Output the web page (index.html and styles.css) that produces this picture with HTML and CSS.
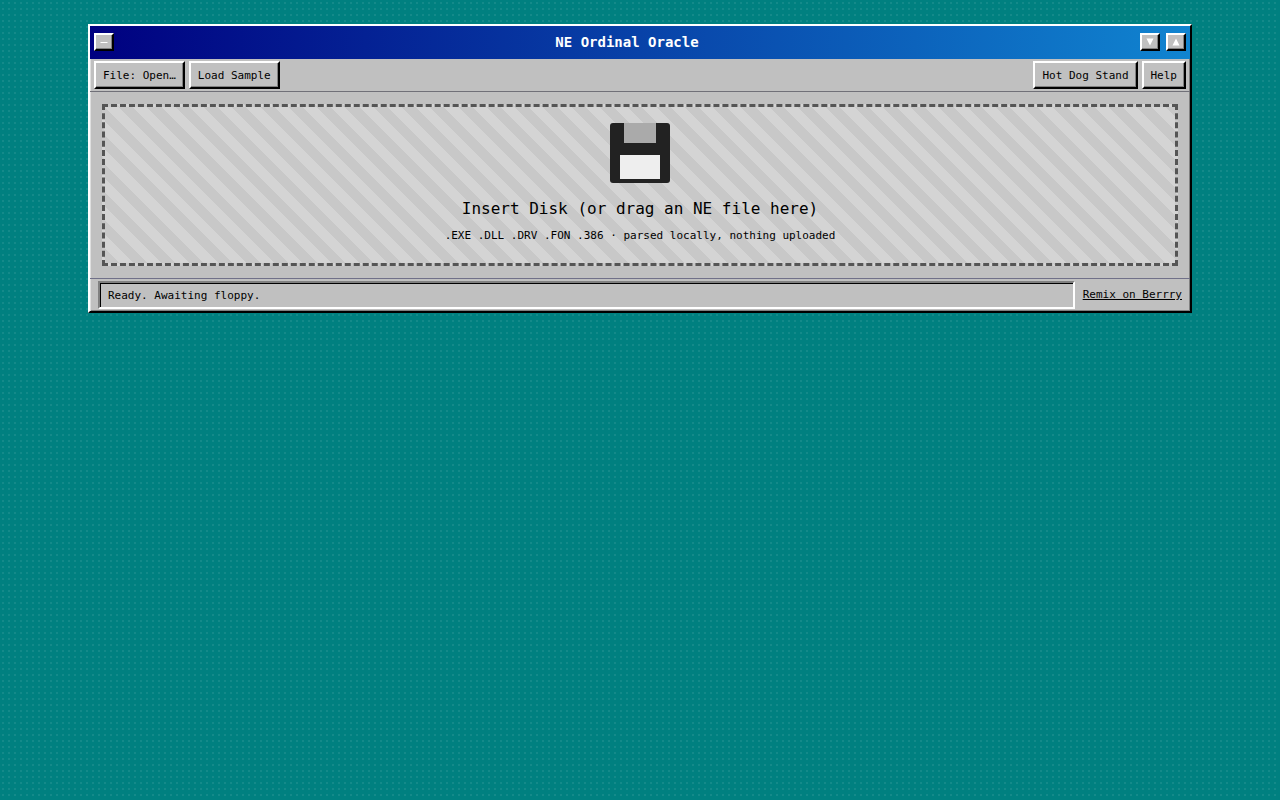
FILE: index.html
```html
<!DOCTYPE html>
<html lang="en">
<head>
<meta charset="utf-8">
<meta name="viewport" content="width=device-width, initial-scale=1">
<title>NE Ordinal Oracle</title>
<link rel="stylesheet" href="styles.css">
</head>
<body>
<main class="window">
  <header class="titlebar">
    <button class="sysbtn" type="button" aria-label="System menu"><svg width="8" height="8" viewBox="0 0 8 8" aria-hidden="true"><path d="M0.500 4.500H7.500" stroke="#fff" fill="none"/></svg></button>
    <h1 class="title">NE Ordinal Oracle</h1>
    <div class="controls">
      <button class="sysbtn" type="button" aria-label="Minimize"><svg width="8" height="8" viewBox="0 0 8 8" aria-hidden="true"><path d="M0.500 0.500H7.500L4 7.500Z" fill="#fff"/></svg></button>
      <button class="sysbtn" type="button" aria-label="Maximize"><svg width="8" height="8" viewBox="0 0 8 8" aria-hidden="true"><path d="M0.500 7.500H7.500L4 0.500Z" fill="#fff"/></svg></button>
    </div>
  </header>
  <nav class="toolbar" aria-label="Tools">
    <button class="btn" type="button">File: Open…</button>
    <button class="btn" type="button">Load Sample</button>
    <span class="spacer"></span>
    <button class="btn" type="button">Hot Dog Stand</button>
    <button class="btn" type="button">Help</button>
  </nav>
  <div class="content">
    <section class="dropzone">
      <svg class="floppy" width="60" height="60" viewBox="0 0 60 60" aria-hidden="true">
        <rect width="60" height="60" rx="3" fill="#222"/>
        <rect x="14" width="32" height="20" fill="#aaa"/>
        <rect x="10" y="32" width="40" height="24" fill="#eee"/>
      </svg>
      <h2 class="drop-title">Insert Disk (or drag an NE file here)</h2>
      <p class="drop-hint">.EXE .DLL .DRV .FON .386 · parsed locally, nothing uploaded</p>
    </section>
  </div>
  <footer class="statusbar">
    <div class="status" role="status">Ready. Awaiting floppy.</div>
    <a class="remix" href="#">Remix on Berrry</a>
  </footer>
</main>
</body>
</html>
```
FILE: styles.css
```css
* {
  box-sizing: border-box;
}

body {
  margin: 0;
  padding: 24px;
  min-height: 100vh;
  background-color: #008080;
  background-image: radial-gradient(rgba(255, 255, 255, 0.08) 1px, transparent 1px);
  background-size: 6px 6px;
  color: #000;
  font: 11px/16px "DejaVu Sans Mono", "Liberation Mono", monospace;
}

.window {
  max-width: 1104px;
  margin: 0 auto;
  background: #c0c0c0;
  border: 2px solid;
  border-color: #fff #000 #000 #fff;
  box-shadow: inset 1px 1px 0 #dfdfdf, inset -1px -1px 0 #808080;
}

.titlebar {
  display: flex;
  align-items: center;
  padding: 6px 4px 7px;
  background: linear-gradient(90deg, #000080, #1084d0);
  color: #fff;
}

.title {
  flex: 1;
  margin: 0;
  font-size: 14px;
  line-height: 20px;
  font-weight: bold;
  text-align: center;
}

.controls {
  display: flex;
  gap: 6px;
}

.sysbtn {
  display: flex;
  align-items: center;
  justify-content: center;
  width: 20px;
  height: 18px;
  padding: 0;
  background: #c0c0c0;
  border: 2px solid;
  border-color: #fff #000 #000 #fff;
  box-shadow: inset -1px -1px 0 #808080;
}

.toolbar {
  display: flex;
  gap: 4px;
  padding: 2px 4px;
  border-bottom: 1px solid #707078;
}

.btn {
  height: 28px;
  padding: 2px 7px 0;
  background: #c0c0c0;
  border: 2px solid;
  border-color: #fff #000 #000 #fff;
  box-shadow: inset -1px -1px 0 #808080;
  color: #000;
  font: inherit;
}

.spacer {
  flex: 1;
}

.content {
  padding: 12px;
}

.dropzone {
  display: flex;
  flex-direction: column;
  align-items: center;
  padding: 16px;
  border: 3px dashed #555;
  background: repeating-linear-gradient(45deg, #c8c8c8 0 10px, #d4d4d4 10px 20px);
  text-align: center;
}

.drop-title {
  margin: 14px 0 7px;
  font-size: 16px;
  line-height: 24px;
  font-weight: normal;
}

.drop-hint {
  margin: 0 0 3px;
  line-height: 16px;
}

.statusbar {
  display: flex;
  align-items: center;
  gap: 8px;
  padding: 2px 8px;
  border-top: 1px solid #707088;
}

.status {
  flex: 1;
  padding: 5px 8px 3px;
  border: 2px solid;
  border-color: #808080 #fff #fff #808080;
  box-shadow: inset 1px 1px 0 #000;
}

.remix {
  color: #000;
}
```
